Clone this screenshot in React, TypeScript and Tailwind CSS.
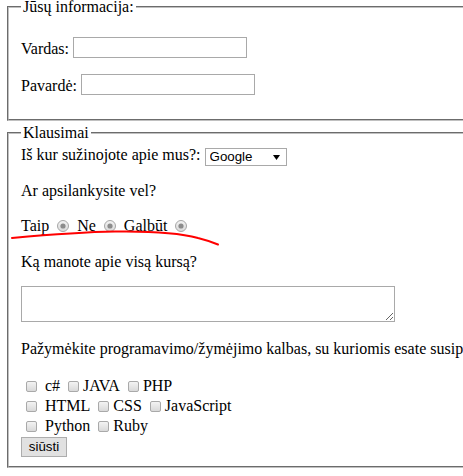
import { useState } from "react";

const serif = "[font-family:'Liberation_Serif','Times_New_Roman',serif]";

function Radio() {
  return (
    <svg width="12" height="12" viewBox="0 0 12 12" className="shrink-0">
      <defs>
        <linearGradient id="rg" x1="0" y1="0" x2="0" y2="1">
          <stop offset="0" stopColor="#f4f4f4" />
          <stop offset="1" stopColor="#d8d8d8" />
        </linearGradient>
      </defs>
      <circle cx="6" cy="6" r="5.5" fill="url(#rg)" stroke="#a6a6a6" />
      <circle cx="6" cy="6" r="2.6" fill="#8c8c8c" />
    </svg>
  );
}

function Box({ className = "" }: { className?: string }) {
  return (
    <input
      type="checkbox"
      className={`appearance-none shrink-0 w-[11px] h-[11px] mt-[4px] rounded-[2px] border border-[#a9a9a9] bg-gradient-to-b from-[#f3f3f3] to-[#d9d9d9] ${className}`}
    />
  );
}

export default function App() {
  const [vardas, setVardas] = useState("");
  const [pavarde, setPavarde] = useState("");

  const langs = [
    ["c#", "JAVA", "PHP"],
    ["HTML", "CSS", "JavaScript"],
    ["Python", "Ruby"],
  ];

  return (
    <div className={`w-full h-screen overflow-hidden bg-white text-black text-[16px] ${serif}`}>
      <form className="relative w-[720px]" onSubmit={(e) => e.preventDefault()}>
        {/* --- Jūsų informacija --- */}
        <fieldset className="ml-[7px] mt-[-2px] px-3 pb-6 border-2 [border-style:groove] border-[#c0c0c0]">
          <legend className="px-[2px] leading-[18px]">Jūsų informacija:</legend>
          <div className="flex items-start mt-[21px]">
            <span className="leading-[18px] mt-[3px]">Vardas:</span>
            <input
              value={vardas}
              onChange={(e) => setVardas(e.target.value)}
              className="ml-[4px] w-[174px] h-[21px] border border-[#a9a9a9] px-[2px] text-[13.33px] [font-family:'Liberation_Sans',Arial,sans-serif] outline-none"
            />
          </div>
          <div className="flex items-start mt-[16px]">
            <span className="leading-[18px] mt-[3px]">Pavardė:</span>
            <input
              value={pavarde}
              onChange={(e) => setPavarde(e.target.value)}
              className="ml-[4px] w-[174px] h-[21px] border border-[#a9a9a9] px-[2px] text-[13.33px] [font-family:'Liberation_Sans',Arial,sans-serif] outline-none"
            />
          </div>
        </fieldset>

        {/* --- Klausimai --- */}
        <fieldset className="ml-[7px] mt-[3px] px-3 pb-[9px] border-2 [border-style:groove] border-[#c0c0c0]">
          <legend className="px-[2px] leading-[18px]">Klausimai</legend>

          <div className="flex items-start mt-[4px]">
            <span className="leading-[18px]">Iš kur sužinojote apie mus?:</span>
            <span className="relative ml-[4px] mt-[2px] flex items-center w-[82px] h-[18px] border border-[#a9a9a9] bg-white">
              <select className="appearance-none w-full h-full pl-[4px] bg-transparent text-[13.33px] leading-[16px] [font-family:'Liberation_Sans',Arial,sans-serif] outline-none">
                <option>Google</option>
                <option>Facebook</option>
                <option>Draugai</option>
              </select>
              <svg width="7" height="5" viewBox="0 0 7 5" className="absolute right-[6px] top-[6px] pointer-events-none">
                <path d="M0 0 H7 L3.5 5 Z" fill="#000" />
              </svg>
            </span>
          </div>

          <p className="leading-[18px] mt-4">Ar apsilankysite vel?</p>

          <div className="flex items-center leading-[18px] mt-[17px]">
            <span>Taip</span>
            <span className="ml-[8px] mr-[8px]"><Radio /></span>
            <span>Ne</span>
            <span className="ml-[8px] mr-[8px]"><Radio /></span>
            <span>Galbūt</span>
            <span className="ml-[8px]"><Radio /></span>
          </div>

          <p className="leading-[18px] mt-[18px]">Ką manote apie visą kursą?</p>

          <textarea className="block mt-[15px] w-[374px] h-[36px] border border-[#a9a9a9] resize outline-none" />

          <p className="leading-[18px] mt-[18px] whitespace-nowrap">
            Pažymėkite programavimo/žymėjimo kalbas, su kuriomis esate susipažinę:
          </p>

          <div className="mt-[19px]">
            {langs.map((row, ri) => (
              <div key={ri} className="flex items-start h-[20px] leading-[18px]">
                {row.map((l, i) => (
                  <label key={l} className="flex items-start">
                    <Box className={i === 0 ? "ml-[5px]" : "ml-[8px]"} />
                    <span className={i === 0 ? "ml-[8px]" : "ml-[4px]"}>{l}</span>
                  </label>
                ))}
              </div>
            ))}
          </div>

          <button
            type="submit"
            className="block w-[46px] h-[20px] border border-[#adadad] bg-[#e1e1e1] text-[13.33px] leading-[16px] [font-family:'Liberation_Sans',Arial,sans-serif]"
          >
            siūsti
          </button>
        </fieldset>

        {/* hand-drawn underline */}
        <svg width="463" height="476" className="absolute left-0 top-0 pointer-events-none">
          <path
            d="M12 240 C 45 237, 80 234, 115 233.5 C 150 233, 180 235, 198 240 C 206 242, 212 244, 218 246.5"
            fill="none"
            stroke="#ff0000"
            strokeWidth="2"
            strokeLinecap="round"
          />
        </svg>
      </form>
    </div>
  );
}
